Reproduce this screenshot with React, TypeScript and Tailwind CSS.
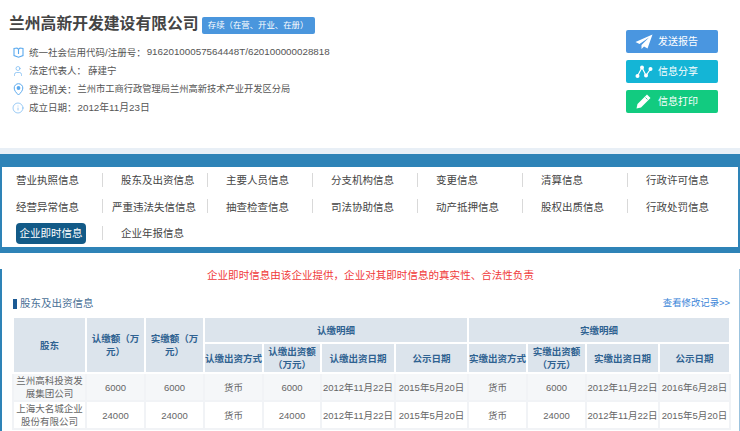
import { User, Info } from 'lucide-react';
import type { ReactNode } from 'react';

const FONT = 'font-["Liberation_Sans","Noto_Sans_CJK_SC",sans-serif]';

function BookIcon() {
  return (
    <svg width="11" height="11" viewBox="0 0 11 11" fill="none" stroke="#5aa9ee" strokeWidth="1.1">
      <path d="M1 1.5 L4 1 L5.5 2.2 L7 1 L10 1.5 V8.5 L5.5 10.2 L1 8.5 Z" />
      <path d="M5.5 2.2 V7" />
    </svg>
  );
}

function PinIcon() {
  return (
    <svg width="11" height="13" viewBox="0 0 11 13" fill="none" stroke="#5aa9ee" strokeWidth="1">
      <path d="M5.5 12 C3 9.5 1.2 7.5 1.2 5 A4.3 4.3 0 0 1 9.8 5 C9.8 7.5 8 9.5 5.5 12 Z" />
      <circle cx="5.5" cy="5" r="1.9" fill="#5aa9ee" stroke="none" />
    </svg>
  );
}

const INFO_ROWS: { icon: ReactNode; label: string; value: string; size: string }[] = [
  { icon: <BookIcon />, label: '统一社会信用代码/注册号：', value: '91620100057564448T/620100000028818', size: 'text-[9.8px] ml-[1px]' },
  { icon: <User size={12} strokeWidth={1.2} className="text-[#5aa9ee]" />, label: '法定代表人：', value: '薛建宁', size: 'text-[9.5px] ml-[2px]' },
  { icon: <PinIcon />, label: '登记机关：', value: '兰州市工商行政管理局兰州高新技术产业开发区分局', size: 'text-[9.26px] ml-[1px]' },
  { icon: <Info size={12} strokeWidth={1.2} className="text-[#5aa9ee]" />, label: '成立日期：', value: '2012年11月23日', size: 'text-[9.8px] ml-[1px]' },
];

const NAV_ROWS = [
  ['营业执照信息', '股东及出资信息', '主要人员信息', '分支机构信息', '变更信息', '清算信息', '行政许可信息'],
  ['经营异常信息', '严重违法失信信息', '抽查检查信息', '司法协助信息', '动产抵押信息', '股权出质信息', '行政处罚信息'],
  ['企业即时信息', '企业年报信息'],
];

const ROWS = [
  { name: '兰州高科投资发展集团公司', amount: '6000', paidDate: '2012年11月22日', notice: '2015年5月20日', realDate: '2012年11月22日', realNotice: '2016年6月28日' },
  { name: '上海大名城企业股份有限公司', amount: '24000', paidDate: '2012年11月22日', notice: '2015年5月20日', realDate: '2012年11月22日', realNotice: '2015年5月20日' },
];

const th = 'border-2 border-white bg-[#dce4ec] px-0 text-center font-bold text-[9.5px] leading-[13px] text-[#2f6291]';
const td = 'border-2 border-[#f1f3f6] px-0 text-center text-[9.5px] leading-[13px] text-[#666]';

function PlaneIcon() {
  return (
    <svg width="18" height="16" viewBox="0 0 18 16" fill="#fff">
      <path d="M17.5 0.5 L0.5 8 L4.5 10 L14 3.5 L6.5 11 L6.5 15 L9 12.5 L12.5 14.5 Z" />
    </svg>
  );
}

function ShareIcon() {
  return (
    <svg width="18" height="14" viewBox="0 0 18 14" fill="#fff" stroke="#fff">
      <path d="M2.5 11 L7 2.5 L11 10.5 L15.5 4" fill="none" strokeWidth="1.2" />
      <circle cx="2.5" cy="11" r="2" stroke="none" />
      <circle cx="7" cy="2.5" r="2" stroke="none" />
      <circle cx="11" cy="10.5" r="2" stroke="none" />
      <circle cx="15.5" cy="4" r="2" stroke="none" />
    </svg>
  );
}

function PencilIcon() {
  return (
    <svg width="15" height="15" viewBox="0 0 15 15" fill="#fff">
      <path d="M11 0.5 L14.5 4 L5 13.5 L0.5 14.5 L1.5 10 Z" />
      <path d="M9.5 3.5 L11.5 5.5" stroke="#12cb80" strokeWidth="0.8" />
    </svg>
  );
}

const BUTTONS = [
  { label: '发送报告', color: 'bg-[#4a96e0]', icon: <PlaneIcon /> },
  { label: '信息分享', color: 'bg-[#14b5d6]', icon: <ShareIcon /> },
  { label: '信息打印', color: 'bg-[#12cb80]', icon: <PencilIcon /> },
];

export default function App() {
  return (
    <div className={`${FONT} h-[431px] w-[740px] overflow-hidden bg-white`}>
      {/* top header */}
      <div className="flex h-[148px] justify-between pl-[9px] pr-[22px]">
        <div>
          <div className="flex h-[36px] items-end gap-[3px] pb-[1px]">
            <h1 className="text-[15.8px] font-bold leading-[22px] text-[#444]">兰州高新开发建设有限公司</h1>
            <span className="mb-[1px] flex h-[17px] w-[113px] items-center justify-center rounded-[2px] bg-[#4a96dd] text-[8.4px] text-white">
              存续（在营、开业、在册）
            </span>
          </div>
          <div className="mt-[10px] flex flex-col gap-[5px]">
            {INFO_ROWS.map(({ icon, label, value, size }) => (
              <div key={label} className="flex h-[13.5px] items-center text-[9.5px] text-[#555]">
                <span className="ml-[3px] mr-[5px] flex w-[12px] justify-center">{icon}</span>
                <span>{label}</span>
                <span className={size}>{value}</span>
              </div>
            ))}
          </div>
        </div>
        <div className="mt-[30px] flex w-[92px] flex-col gap-[7px]">
          {BUTTONS.map(b => (
            <div key={b.label} className={`flex h-[23px] items-center rounded-[2px] ${b.color} text-[10px] text-white`}>
              <span className="flex w-[32px] justify-center pl-[3px]">{b.icon}</span>
              <span>{b.label}</span>
            </div>
          ))}
        </div>
      </div>

      <div className="h-[6px] bg-[#e8eff6]" />

      {/* nav */}
      <div className="bg-[#2e83b7] px-[2px] pb-[6px] pt-[13px]">
        <div className="h-[80px] bg-white pt-[1px]">
          {NAV_ROWS.map((row, i) => (
            <div key={i} className="flex h-[26.3px] items-center">
              {row.map((item, j) => {
                const active = item === '企业即时信息';
                const wide = item === '严重违法失信信息';
                return (
                  <div key={item} className="relative flex h-[26px] w-[105px] items-center pl-[14px] text-[10.5px]">
                    {active ? (
                      <span className="flex h-[21px] w-[70px] items-center justify-center rounded-[4px] bg-[#125a87] text-white">{item}</span>
                    ) : (
                      <span className={`whitespace-nowrap text-[#444] ${wide ? '-ml-[9px]' : ''}`}>{item}</span>
                    )}
                    {j < row.length - 1 && <span className="absolute right-[4px] top-[5px] h-[14px] w-px bg-[#d9d9d9]" />}
                  </div>
                );
              })}
            </div>
          ))}
        </div>
      </div>

      {/* content */}
      <div className="h-[178px] border-l-2 border-r border-l-[#2e83b7] border-r-[#9cc3de] pl-[11px] pr-[9px]">
        <p className="mt-[16px] pl-[194px] text-[10.55px] leading-[12px] text-[#f03a3a]">
          企业即时信息由该企业提供，企业对其即时信息的真实性、合法性负责
        </p>
        <div className="mt-[11px] flex h-[24px] items-center justify-between">
          <div className="flex items-center">
            <span className="mr-[3px] h-[10px] w-[4px] bg-[#1c5a94]" />
            <span className="text-[10.5px] text-[#4a7096]">股东及出资信息</span>
          </div>
          <a className="mb-[1px] text-[9.4px] text-[#3a85d8]">查看修改记录&gt;&gt;</a>
        </div>
        <table className="-ml-[1px] mt-0 w-[717px] table-fixed border-collapse">
          <colgroup>
            <col className="w-[73px]" />
            <col className="w-[59px]" />
            <col className="w-[59px]" />
            <col className="w-[59px]" />
            <col className="w-[58px]" />
            <col className="w-[74px]" />
            <col className="w-[73px]" />
            <col className="w-[59px]" />
            <col className="w-[59px]" />
            <col className="w-[73px]" />
            <col className="w-[71px]" />
          </colgroup>
          <thead>
            <tr className="h-[26px]">
              <th rowSpan={2} className={th}>股东</th>
              <th rowSpan={2} className={th}>认缴额（万元）</th>
              <th rowSpan={2} className={th}>实缴额（万元）</th>
              <th colSpan={4} className={th}>认缴明细</th>
              <th colSpan={4} className={th}>实缴明细</th>
            </tr>
            <tr className="h-[30px]">
              <th className={th}>认缴出资方式</th>
              <th className={th}>认缴出资额（万元）</th>
              <th className={th}>认缴出资日期</th>
              <th className={th}>公示日期</th>
              <th className={th}>实缴出资方式</th>
              <th className={th}>实缴出资额（万元）</th>
              <th className={th}>实缴出资日期</th>
              <th className={th}>公示日期</th>
            </tr>
          </thead>
          <tbody>
            {ROWS.map((r, i) => (
              <tr key={r.name} className={`h-[28px] ${i === 0 ? 'bg-[#f5f7f9]' : 'bg-white'}`}>
                <td className={td}>{r.name}</td>
                <td className={td}>{r.amount}</td>
                <td className={td}>{r.amount}</td>
                <td className={td}>货币</td>
                <td className={td}>{r.amount}</td>
                <td className={td}>{r.paidDate}</td>
                <td className={td}>{r.notice}</td>
                <td className={td}>货币</td>
                <td className={td}>{r.amount}</td>
                <td className={td}>{r.realDate}</td>
                <td className={td}>{r.realNotice}</td>
              </tr>
            ))}
          </tbody>
        </table>
      </div>
    </div>
  );
}
